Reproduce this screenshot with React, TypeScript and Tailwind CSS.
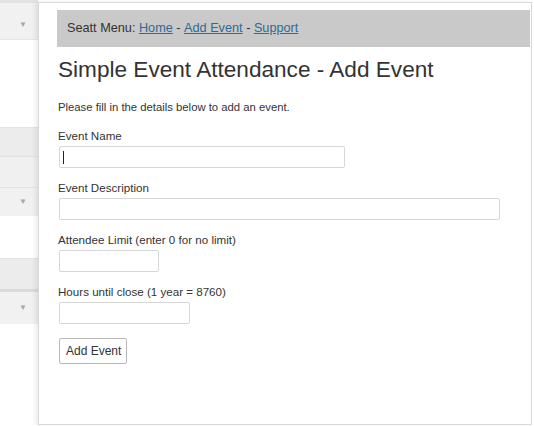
import React from "react";

function Tri() {
  return <span className="text-[8px] leading-none text-[#a8a8a8]">▼</span>;
}

export default function App() {
  return (
    <div className="w-[534px] h-[426px] bg-white flex overflow-hidden" style={{ fontFamily: '"Liberation Sans", Arial, sans-serif' }}>
      <div className="w-[38px] shrink-0 flex flex-col">
        <div className="h-[3px] bg-[#e3e3e3]" />
        <div className="h-[37px] bg-[#f1f1f1] border-b border-[#e6e6e6] flex items-start justify-end pr-[11px] pt-[18px]"><Tri /></div>
        <div className="h-[87px]" />
        <div className="h-[29px] bg-[#ececec] border-t border-[#e4e4e4]" />
        <div className="h-[31px] bg-[#f0f0f0] border-t border-[#e2e2e2]" />
        <div className="h-[29px] bg-[#f1f1f1] border-t border-[#e2e2e2] flex items-center justify-end pr-[11px]"><Tri /></div>
        <div className="h-[42px]" />
        <div className="h-[31px] bg-[#ececec] border-t border-[#e4e4e4]" />
        <div className="h-[3px] bg-[#dadada]" />
        <div className="h-[32px] bg-[#f1f1f1] flex items-center justify-end pr-[11px]"><Tri /></div>
      </div>
      <div className="w-[494px] shrink-0 mt-[2px] h-[423px] bg-white border-t border-r border-b border-l border-[#d8d8d8] shadow-[-3px_0_4px_rgba(0,0,0,0.07)] pl-[18px] pr-[1px] pt-[7px] flex flex-col text-[#333]">
        <div className="h-[37px] bg-[#c9c9c9] flex items-center pl-[10px] pt-[1px] text-[12.7px] text-[#333]">
          <span>Seatt Menu:&nbsp;</span>
          <a className="underline text-[#2f6a94]">Home</a>
          <span>&nbsp;-&nbsp;</span>
          <a className="underline text-[#2f6a94]">Add Event</a>
          <span>&nbsp;-&nbsp;</span>
          <a className="underline text-[#2f6a94]">Support</a>
        </div>
        <h1 className="mt-[9px] text-[22.6px] leading-[28px] text-[#333] pl-[1px]">Simple Event Attendance - Add Event</h1>
        <p className="mt-[16px] text-[11.3px] leading-[14px] pl-[1px]">Please fill in the details below to add an event.</p>
        <label className="mt-[15px] text-[11.6px] leading-[14px] pl-[1px]">Event Name</label>
        <div className="mt-[3px] ml-[2px] w-[286px] h-[22px] border border-[#d6d6d6] rounded-[2px] flex items-center pl-[3px]">
          <div className="w-px h-[13px] bg-[#222]" />
        </div>
        <label className="mt-[13px] text-[11.6px] leading-[14px] pl-[1px]">Event Description</label>
        <div className="mt-[3px] ml-[2px] w-[441px] h-[22px] border border-[#d6d6d6] rounded-[2px]" />
        <label className="mt-[13px] text-[11.6px] leading-[14px] pl-[1px]">Attendee Limit (enter 0 for no limit)</label>
        <div className="mt-[3px] ml-[2px] w-[100px] h-[22px] border border-[#d6d6d6] rounded-[2px]" />
        <label className="mt-[13px] text-[11.6px] leading-[14px] pl-[1px]">Hours until close (1 year = 8760)</label>
        <div className="mt-[3px] ml-[2px] w-[131px] h-[22px] border border-[#d6d6d6] rounded-[2px]" />
        <button className="mt-[14px] ml-[2px] w-[68px] h-[26px] border border-[#b8b8b8] rounded-[2px] bg-white text-[12px] text-[#333] text-left pl-[6px]">Add Event</button>
      </div>
    </div>
  );
}
